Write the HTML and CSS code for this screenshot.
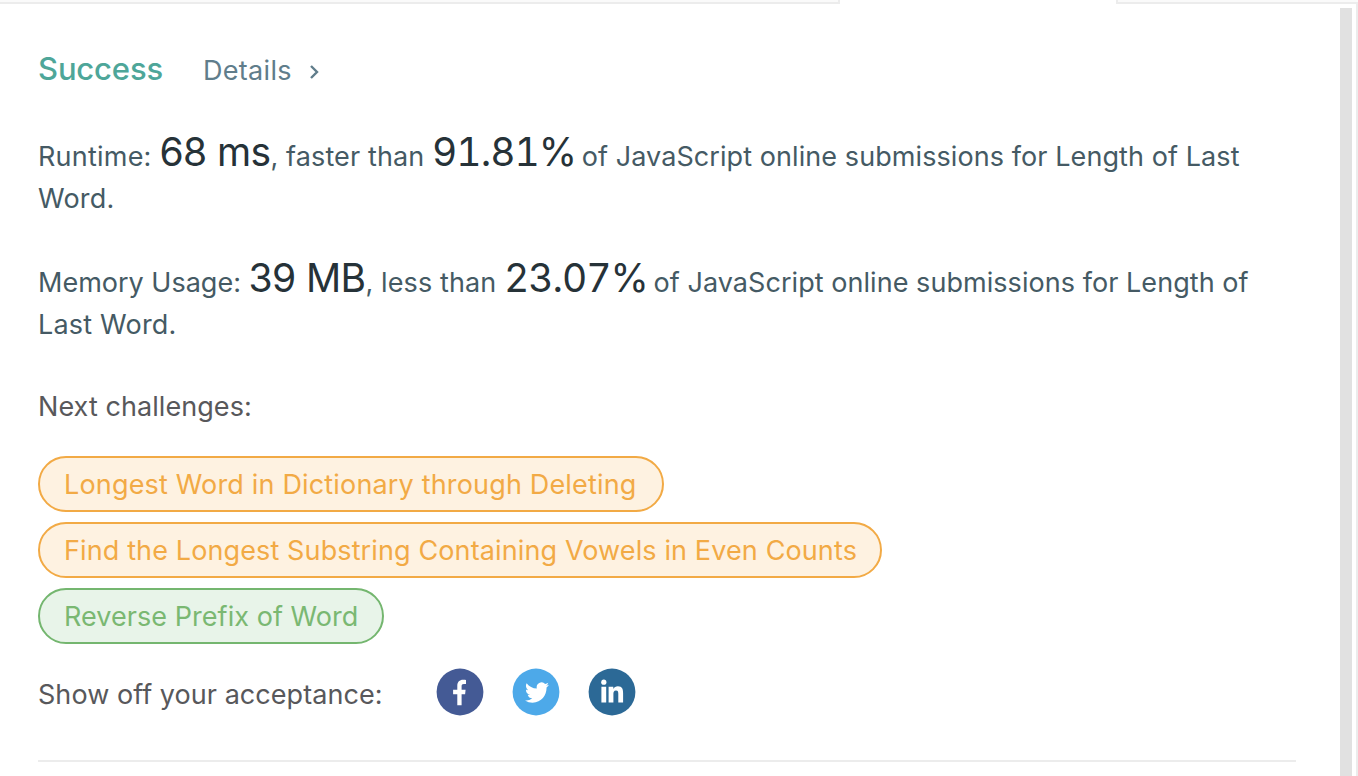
FILE: index.html
```html
<!DOCTYPE html>
<html lang="en">
<head>
<meta charset="utf-8">
<title>Submission result</title>
<link rel="stylesheet" href="styles.css">
</head>
<body>
<div class="page">
  <div class="tabs">
    <div class="tab tab-left"></div>
    <div class="tab-active"></div>
    <div class="tab tab-right"></div>
  </div>
  <div class="panel">
    <main class="content">
      <header class="status">
        <span class="success">Success</span>
        <a class="details">Details</a>
        <svg class="chevron" width="12" height="16" viewBox="0 0 12 16" fill="none" stroke="#607d8b" stroke-width="2.4"><path d="M2 2l6 6-6 6"/></svg>
      </header>
      <p class="stat"><span class="runtime-label">Runtime: </span><span class="figure amount">68 ms</span><span class="faster">, faster than </span><span class="figure percent">91.81%</span><span class="runtime-rest"> of JavaScript online submissions for Length of Last</span><br><span class="tail">Word.</span></p>
      <p class="stat"><span class="memory-label">Memory Usage: </span><span class="figure amount">39 MB</span><span class="less">, less than </span><span class="figure percent">23.07%</span><span class="memory-rest"> of JavaScript online submissions for Length of</span><br><span class="tail">Last Word.</span></p>
      <div class="next">Next challenges:</div>
      <div class="challenges">
        <a class="pill medium pill-dictionary">Longest Word in Dictionary through Deleting</a>
        <a class="pill medium pill-vowels">Find the Longest Substring Containing Vowels in Even Counts</a>
        <a class="pill easy pill-prefix">Reverse Prefix of Word</a>
      </div>
      <div class="share">
        <span class="share-label">Show off your acceptance:</span>
        <svg class="social" viewBox="0 0 48 48"><circle cx="24" cy="24" r="23.4" fill="#445a95"/><path fill="#fff" d="M21.3 37.3V26.3h-4.200v-4.600h4.200v-3.800c0-4 2.200-6.200 5.800-6.200 1.400 0 2.400.1 2.900.2v4.200h-2.100c-1.700 0-2.300.9-2.300 2.200v3.400h4l-.5 4.600h-3.500v11z"/></svg>
        <svg class="social" viewBox="0 0 48 48"><circle cx="24" cy="24" r="23.4" fill="#4da9e9"/><path fill="#fff" transform="translate(13 11.9) scale(1 1.05)" d="M23.950 4.570a10 10 0 0 1-2.820.780 4.960 4.960 0 0 0 2.160-2.730c-.95.56-2 .96-3.130 1.190a4.920 4.920 0 0 0-8.380 4.480C7.690 8.090 4.070 6.130 1.640 3.160a4.820 4.820 0 0 0-.67 2.480c0 1.710.87 3.210 2.190 4.100a4.900 4.900 0 0 1-2.230-.62v.06a4.920 4.920 0 0 0 3.950 4.830 5 5 0 0 1-2.210.08 4.940 4.940 0 0 0 4.600 3.420A9.870 9.870 0 0 1 0 19.540a13.990 13.990 0 0 0 7.550 2.210c9.050 0 14-7.500 14-13.980 0-.21 0-.42-.02-.63a9.940 9.940 0 0 0 2.420-2.570z"/></svg>
        <svg class="social" viewBox="0 0 48 48"><circle cx="24" cy="24" r="23.4" fill="#2c6996"/><g fill="#fff"><circle cx="15.8" cy="14.2" r="2.6"/><path d="M13.400 18.700h4.800V34.400h-4.800zM20.600 18.700h4.700v2.200c.9-1.500 2.600-2.600 4.600-2.600 4.500 0 5.200 3.100 5.200 7v9.100h-4.800v-8.100c0-2.500-.1-3.900-2.300-3.900-2.300 0-2.600 1.800-2.600 3.800v8.200h-4.800z"/></g></svg>
      </div>
      <hr class="divider">
    </main>
    <div class="scrollbar"></div>
  </div>
</div>
</body>
</html>
```
FILE: styles.css
```css
* { box-sizing: border-box; }
body { margin: 0; background: #fff; font-family: Inter, "Liberation Sans", sans-serif; font-size: 27px; line-height: 42px; overflow: hidden; }
.page { width: 1358px; height: 776px; display: flex; flex-direction: column; }
.tabs { height: 4px; display: flex; }
.tab { background: #fafafa; border-bottom: 2px solid #ececec; }
.tab-left { width: 840px; border-right: 2px solid #ececec; }
.tab-active { width: 276px; }
.tab-right { flex: 1; border-left: 2px solid #ececec; }
.panel { flex: 1; display: flex; justify-content: space-between; border-right: 2px solid #ececec; padding: 0 4px 0 38px; }
.content { width: 1258px; padding-top: 44px; }
.scrollbar { width: 12px; margin-top: 4px; background: #e1e1e1; }
.status { display: flex; align-items: baseline; height: 42px; }
.success { width: 165px; color: #4ea699; font-size: 31px; font-weight: 500; letter-spacing: -0.15px; }
.details { width: 106px; color: #607d8b; letter-spacing: 0.3px; }
.chevron { align-self: center; margin-top: 5px; }
.stat { margin: 46px 0 0; color: #455a64; white-space: pre; }
.stat + .stat { margin-top: 42px; }
.figure { color: #263238; font-size: 39px; line-height: 0; }
.amount { letter-spacing: -0.6px; }
.percent { font-variant-numeric: tabular-nums; letter-spacing: -1px; margin-right: -2px; }
.runtime-label { letter-spacing: 0.22px; }
.faster { letter-spacing: 0.12px; }
.less { letter-spacing: 0.1px; }
.runtime-rest { letter-spacing: 0.08px; }
.memory-rest { letter-spacing: 0.05px; }
.tail { letter-spacing: 0.2px; }
.next { margin-top: 40px; color: #58585b; letter-spacing: 0.06px; }
.challenges { margin-top: 28px; display: flex; flex-direction: column; align-items: flex-start; gap: 10px; }
.pill { height: 56px; padding: 1px 24px 0; border: 2px solid; border-radius: 28px; line-height: 52px; white-space: nowrap; }
.medium { color: #f2aa45; background: #fef2e1; border-color: #f2aa45; }
.easy { color: #7ab872; background: #e8f4e9; border-color: #74b66f; }
.pill-dictionary { width: 626px; letter-spacing: 0.165px; }
.pill-vowels { width: 844px; letter-spacing: 0.12px; }
.pill-prefix { width: 346px; letter-spacing: 0.05px; }
.share { margin-top: 24px; height: 48px; display: flex; gap: 28px; color: #58585b; }
.share-label { width: 370px; padding-top: 6px; letter-spacing: 0.05px; }
.social { width: 48px; height: 48px; }
.divider { margin: 44px 0 0; border: 0; height: 2px; background: #ececec; }
```
